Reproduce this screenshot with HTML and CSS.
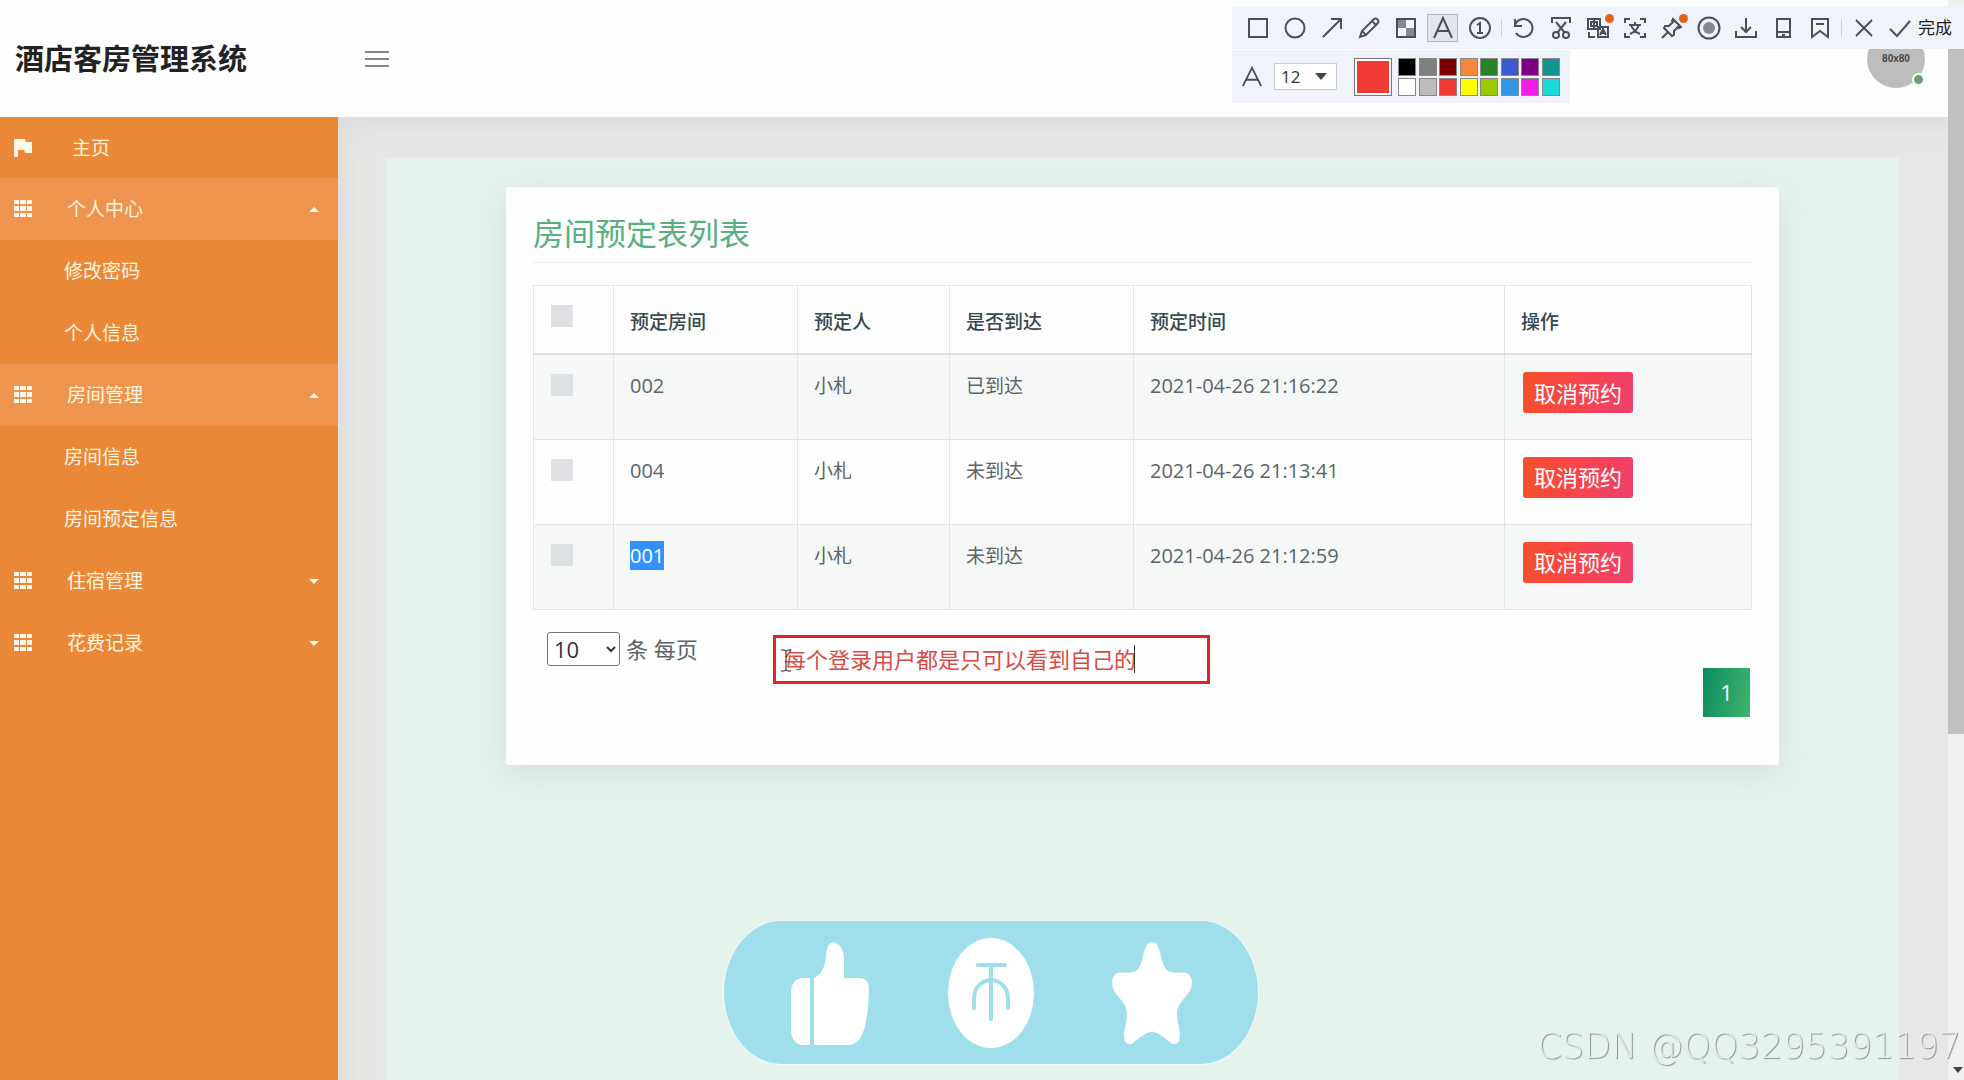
FILE: index.html
```html
<!DOCTYPE html>
<html lang="zh-CN">
<head>
<meta charset="utf-8">
<meta name="viewport" content="width=device-width, initial-scale=1">
<title>酒店客房管理系统</title>
<link rel="stylesheet" href="styles.css">
</head>
<body>
<svg class="defs" width="0" height="0" aria-hidden="true">
  <symbol id="grid" viewBox="0 0 18 18"><path d="M0 0h5v4H0zM6 0h6v4H6zM13 0h5v4h-5zM0 6h5v5H0zM6 6h6v5H6zM13 6h5v5h-5zM0 13h5v4H0zM6 13h6v4H6zM13 13h5v4h-5z"/></symbol>
  <symbol id="up" viewBox="0 0 12 6"><path d="M0 6 6 0l6 6z"/></symbol>
  <symbol id="down" viewBox="0 0 12 6"><path d="M0 0l6 6 6-6z"/></symbol>
</svg>
<div class="page">
  <header class="header">
    <h1 class="brand">酒店客房管理系统</h1>
    <button class="menu-btn" aria-label="菜单"><svg width="24" height="18" viewBox="0 0 24 18"><path d="M0 2h24M0 9h24M0 16h24"/></svg></button>
    <div class="avatar">80x80<span class="online"></span></div>
  </header>
  <div class="body">
    <nav class="sidebar">
      <a class="item home" href="#"><svg class="icon" viewBox="0 0 18 18"><path d="M0 0h11l1 3h6v11h-7l-1-3H4v7H0z"/></svg><span>主页</span></a>
      <a class="item open" href="#"><svg class="icon"><use href="#grid"/></svg><span>个人中心</span><svg class="caret"><use href="#up"/></svg></a>
      <a class="item sub" href="#">修改密码</a>
      <a class="item sub" href="#">个人信息</a>
      <a class="item open" href="#"><svg class="icon"><use href="#grid"/></svg><span>房间管理</span><svg class="caret"><use href="#up"/></svg></a>
      <a class="item sub" href="#">房间信息</a>
      <a class="item sub" href="#">房间预定信息</a>
      <a class="item" href="#"><svg class="icon"><use href="#grid"/></svg><span>住宿管理</span><svg class="caret"><use href="#down"/></svg></a>
      <a class="item" href="#"><svg class="icon"><use href="#grid"/></svg><span>花费记录</span><svg class="caret"><use href="#down"/></svg></a>
    </nav>
    <main class="main">
      <div class="content">
        <section class="card">
          <h2 class="card-title">房间预定表列表</h2>
          <table class="table">
            <colgroup><col class="c-check"><col class="c-room"><col class="c-guest"><col class="c-status"><col class="c-time"><col class="c-action"></colgroup>
            <thead>
              <tr><th><input class="check" type="checkbox" aria-label="全选"></th><th>预定房间</th><th>预定人</th><th>是否到达</th><th>预定时间</th><th>操作</th></tr>
            </thead>
            <tbody>
              <tr><td><input class="check" type="checkbox" aria-label="选择 002"></td><td class="num">002</td><td>小札</td><td>已到达</td><td class="num">2021-04-26 21:16:22</td><td><button class="cancel">取消预约</button></td></tr>
              <tr><td><input class="check" type="checkbox" aria-label="选择 004"></td><td class="num">004</td><td>小札</td><td>未到达</td><td class="num">2021-04-26 21:13:41</td><td><button class="cancel">取消预约</button></td></tr>
              <tr><td><input class="check" type="checkbox" aria-label="选择 001"></td><td class="num"><span class="selected">001</span></td><td>小札</td><td>未到达</td><td class="num">2021-04-26 21:12:59</td><td><button class="cancel">取消预约</button></td></tr>
            </tbody>
          </table>
          <div class="length">
            <select id="size"><option>10</option><option>20</option></select>
            <label for="size">条 每页</label>
          </div>
          <div class="pager"><button class="page-btn">1</button></div>
          <div class="note">
            <input class="note-input" value="每个登录用户都是只可以看到自己的" aria-label="标注文字">
            <span class="note-caret"></span>
            <svg class="ibeam" width="10" height="23" viewBox="0 0 10 23"><path d="M0 1h3l2 1 2-1h3M5 2v19M0 22h3l2-1 2 1h3"/></svg>
          </div>
        </section>
      </div>
    </main>
  </div>
</div>

<div class="scrollbar"><div class="thumb"></div><svg class="scroll-arrow" width="10" height="6"><path d="M0 0h10L5 6z"/></svg></div>

<div class="shot">
  <div class="tools">
    <button class="tool" aria-label="矩形"><svg viewBox="0 0 24 24"><path d="M3 3h18v18H3z"/></svg></button>
    <button class="tool" aria-label="椭圆"><svg viewBox="0 0 24 24"><circle cx="12" cy="12" r="9.500"/></svg></button>
    <button class="tool" aria-label="箭头"><svg viewBox="0 0 24 24"><path d="M3 21 21 3M11 3h10v10"/></svg></button>
    <button class="tool" aria-label="画笔"><svg viewBox="0 0 24 24"><path d="M3 21l2-6L17 3q2-1 3 0l1 1q1 2 0 3L9 19zM15 5l4 4M5 15l4 4"/></svg></button>
    <button class="tool" aria-label="马赛克"><svg viewBox="0 0 24 24"><path class="grey" d="M3 3h9v9H3zM12 12h9v9h-9z"/><path d="M3 3h18v18H3z"/></svg></button>
    <button class="tool active" aria-label="文字"><svg viewBox="0 0 24 24"><path d="M3 22 12 2l9 20M6 15h12"/></svg></button>
    <button class="tool" aria-label="序号"><svg viewBox="0 0 24 24"><circle cx="12" cy="12" r="10"/><path d="M9 9l3-2v10M9 17h6"/></svg></button>
    <span class="sep"></span>
    <button class="tool" aria-label="撤销"><svg viewBox="0 0 24 24"><path d="M3 3v7h7M3 9a9 9 0 1 1 1 8"/></svg></button>
    <button class="tool" aria-label="裁剪"><svg viewBox="0 0 24 24"><path d="M3 7V2h18v5M7 6l9 11M17 6 8 17"/><circle cx="7" cy="19" r="3"/><circle cx="17" cy="19" r="3"/></svg></button>
    <button class="tool" aria-label="翻译"><svg viewBox="0 0 24 24"><path d="M2 3h12v10H2zM5 6h6v4H5zM8 4v8M12 11h10v10H12zM14 19l3-6 3 6M15 17h4M3 16v5h6"/></svg><i class="dot"></i></button>
    <button class="tool" aria-label="文字识别"><svg viewBox="0 0 24 24"><path d="M2 7V3h5M17 3h5v4M22 17v4h-5M7 21H2v-4M6 9h12M12 6v3M8 9q2 6 9 9M16 9q-2 6-9 9"/></svg></button>
    <button class="tool" aria-label="钉住"><svg viewBox="0 0 24 24"><path d="M13 3l8 8-2 1-1-1-4 4v4l-2 1-8-8 1-2h4l4-4-1-1zM8 16l-6 6"/></svg><i class="dot"></i></button>
    <button class="tool" aria-label="录制"><svg viewBox="0 0 24 24"><circle cx="12" cy="12" r="10.500"/><circle class="fill" cx="12" cy="12" r="6"/></svg></button>
    <button class="tool" aria-label="保存"><svg viewBox="0 0 24 24"><path d="M2 15v6h20v-6M12 2v14M7 11l5 5 5-5"/></svg></button>
    <button class="tool" aria-label="发送到手机"><svg viewBox="0 0 24 24"><path d="M6 3h13v18H6zM6 16h13M11 19h3"/></svg></button>
    <button class="tool" aria-label="收藏"><svg viewBox="0 0 24 24"><path d="M4 3h16v18l-8-6-8 6zM8 8h8"/></svg></button>
    <span class="sep"></span>
    <button class="tool" aria-label="关闭"><svg viewBox="0 0 24 24"><path d="M4 4l16 16M20 4 4 20"/></svg></button>
    <button class="tool done"><svg viewBox="0 0 24 24"><path d="M2 13l7 7L22 5"/></svg>完成</button>
  </div>
  <div class="options">
    <svg class="letter" viewBox="0 0 24 24"><path d="M2 22 12 2l10 20M6 15h12"/></svg>
    <button class="font-size">12<svg width="12" height="7"><path d="M0 0h12L6 7z"/></svg></button>
    <button class="current" aria-label="当前颜色"></button>
    <div class="swatches">
      <button class="sw black" aria-label="黑"></button><button class="sw gray" aria-label="灰"></button><button class="sw maroon" aria-label="深红"></button><button class="sw orange" aria-label="橙"></button><button class="sw green" aria-label="绿"></button><button class="sw blue" aria-label="蓝"></button><button class="sw purple" aria-label="紫"></button><button class="sw teal" aria-label="青"></button>
      <button class="sw white" aria-label="白"></button><button class="sw silver" aria-label="银"></button><button class="sw red" aria-label="红"></button><button class="sw yellow" aria-label="黄"></button><button class="sw lime" aria-label="黄绿"></button><button class="sw sky" aria-label="天蓝"></button><button class="sw magenta" aria-label="品红"></button><button class="sw cyan" aria-label="青蓝"></button>
    </div>
  </div>
</div>

<div class="cheer">
  <svg width="80" height="104" viewBox="0 0 80 104"><path d="M20 37v67h-8Q1 102 1 88V52Q1 39 12 37zM24 104V37Q35 32 36 14 37 2 43 1q10 2 11 16v20h17q8 1 8 12-1 32-7 45-4 9-13 10z"/></svg>
  <svg width="86" height="110" viewBox="0 0 86 110"><ellipse cx="43" cy="55" rx="43" ry="55"/><path class="coin" d="M30 27h27M43 27v54M26 70V61c0-25 34-25 34 0v9"/></svg>
  <svg width="80" height="104" viewBox="0 0 80 104"><path d="M40 1c5 0 7 6 9 14 2 9 4 15 10 16 5 2 13-1 17 2 5 3 5 12 1 18-5 8-12 12-12 22 0 12 5 18 2 27-1 3-5 4-8 2-6-5-13-11-19-11s-13 6-19 11c-3 2-7 1-8-2-3-9 2-15 2-27 0-10-7-14-12-22-4-6-4-15 1-18 4-3 12 0 17-2 6-1 8-7 10-16 2-8 4-14 9-14z"/></svg>
</div>
<div class="watermark">CSDN @QQ3295391197</div>
</body>
</html>
```
FILE: styles.css
```css
* { box-sizing: border-box; }
body {
  margin: 0;
  font-family: "Open Sans", "Noto Sans CJK SC", sans-serif;
  font-size: 19px;
  line-height: 30px;
  color: #5b6469;
  background: #e7e8e5;
}
button, select, input { font: inherit; color: inherit; margin: 0; }
button { border: 0; padding: 0; background: none; }
.defs { position: absolute; }

.page { display: flex; flex-direction: column; min-height: 100vh; padding-right: 16px; }
.header {
  display: flex;
  align-items: center;
  height: 117px;
  padding: 0 23px 0 15px;
  background: #fdfefd;
}
.brand { flex: none; width: 350px; margin: 0; font-size: 29px; line-height: 40px; font-weight: 700; color: #222; }
.menu-btn { display: flex; }
.menu-btn svg { stroke: #858585; stroke-width: 2; }
.avatar {
  position: relative;
  margin-left: auto;
  width: 58px;
  height: 58px;
  border-radius: 50%;
  background: #bdbdbd;
  color: #444;
  font: 700 10px/58px "Liberation Sans", sans-serif;
  text-align: center;
}
.online { position: absolute; right: 0; bottom: 2px; width: 13px; height: 13px; border: 2px solid #f4fff4; border-radius: 50%; background: #6f9c74; }

.body { flex: 1; display: flex; }
.sidebar { flex: none; width: 338px; background: #eb8837; }
.item {
  display: flex;
  align-items: center;
  height: 62px;
  padding: 0 18px 0 14px;
  color: #fff6e0;
  text-decoration: none;
}
.item.home { height: 61px; }
.item.home span { margin-left: 5px; }
.item.open { background: #ee944e; }
.item.sub { padding-left: 64px; }
.icon { flex: none; width: 18px; height: 18px; margin-right: 35px; fill: #fff8e8; }
.caret { width: 12px; height: 5px; margin-left: auto; fill: #fff8e8; }

.main {
  flex: 1;
  min-width: 0;
  display: flex;
  padding: 41px 49px 0 48px;
  box-shadow: inset 20px 20px 26px -10px #dbdddc;
}
.content { flex: 1; min-width: 0; padding: 29px 120px; background: #e6f3ec; }
.card {
  position: relative;
  padding: 27px 27px 48px;
  border-radius: 3px;
  background: #fdfefd;
  box-shadow: 0 8px 30px rgba(205, 214, 220, 0.7);
}
.card-title {
  margin: 0 0 22px;
  padding-bottom: 9px;
  border-bottom: 1px solid #eceeee;
  font-size: 31px;
  line-height: 39px;
  font-weight: 400;
  color: #57b07d;
}
.table { width: 100%; table-layout: fixed; border-collapse: collapse; }
.c-check { width: 80px; }
.c-room, .c-status { width: 184px; }
.c-guest { width: 152px; }
.c-time { width: 371px; }
.table th, .table td { border: 1px solid #e2e5e6; text-align: left; vertical-align: top; padding: 16px; }
.table th { height: 68px; padding-top: 21px; border-bottom: 2px solid #dcdfe0; font-weight: 500; color: #37474f; }
.table td { height: 85px; }
.table tbody tr:nth-child(odd) { background: #f6f8f8; }
.num { font-size: 20px; }
.selected { display: inline-block; line-height: 29px; background: #3390ff; color: #fff; }
.check { appearance: none; display: block; width: 22px; height: 22px; margin: 3px 0 0 1px; background: #dde1e3; }
.table th .check { margin-top: -2px; }
.cancel {
  display: block;
  width: 110px;
  height: 41px;
  margin: 1px 2px;
  border-radius: 3px;
  background: linear-gradient(100deg, #f5502a, #fa4548 45%, #ee406c);
  color: #fff;
  font-size: 22px;
}
.length { display: flex; align-items: center; gap: 6px; margin-top: 22px; padding-left: 14px; font-size: 22px; }
.length select { width: 73px; height: 34px; padding: 0 2px; border: 1px solid #767676; border-radius: 3px; background: #fff; color: #333; }
.pager { display: flex; justify-content: flex-end; margin: 2px 2px 0; }
.page-btn { width: 47px; height: 49px; background: linear-gradient(100deg, #0b8c60, #3fb56d); color: #fff; font-size: 22px; }

.note { position: absolute; left: 267px; top: 448px; width: 437px; height: 49px; }
.note-input { display: block; width: 100%; height: 100%; padding: 0 8px 3px; border: 3px solid #e02424; background: transparent; color: #d84a48; font-size: 22px; }
.note-caret { position: absolute; left: 361px; top: 10px; width: 1px; height: 28px; background: #333; }
.ibeam { position: absolute; left: 8px; top: 14px; fill: none; stroke: #222; }

.scrollbar { position: fixed; top: 0; right: 0; bottom: 0; width: 16px; padding-top: 17px; background: #f0f0ee; }
.thumb { height: 717px; background: #c0c0be; }
.scroll-arrow { position: absolute; left: 5px; bottom: 7px; fill: #444; }

.shot { position: fixed; top: 6px; right: 0; display: flex; flex-direction: column; align-items: flex-start; gap: 1px; }
.tools { display: flex; align-items: center; width: 732px; height: 43px; padding-left: 7px; background: #f0f4fa; }
.tool { position: relative; flex: none; display: flex; align-items: center; justify-content: center; width: 37px; height: 28px; font-size: 17px; color: #222; }
.tool svg { flex: none; width: 24px; height: 24px; fill: none; stroke: #4a4f5a; stroke-width: 2; }
.tool .grey, .tool .fill { fill: #858a96; stroke: none; }
.tool.active { width: 31px; margin: 0 3px; border: 1px solid #b4b8bd; background: #e2e6ea; }
.tool.done { width: auto; gap: 6px; padding-left: 6px; }
.sep { width: 1px; height: 18px; margin: 0 3px; background: #cfd3d8; }
.dot { position: absolute; right: 2px; top: 0; width: 9px; height: 9px; border-radius: 50%; background: #e0601c; }
.options { display: flex; align-items: center; width: 338px; height: 53px; padding-left: 9px; background: #f0f4fa; }
.letter { width: 22px; height: 22px; fill: none; stroke: #4a4f5a; stroke-width: 2; }
.font-size { display: flex; align-items: center; justify-content: space-between; width: 63px; height: 27px; margin-left: 11px; padding: 0 9px 0 6px; border: 1px solid #c8ccd0; background: #fff; font-size: 17px; color: #333; }
.font-size svg { fill: #444; }
.current { width: 38px; height: 38px; margin: 0 6px 0 17px; border: 1px solid #777; background: #f03a36; box-shadow: inset 0 0 0 2px #fff; }
.swatches { display: grid; width: 162px; grid-template-columns: repeat(8, 18px); justify-content: space-between; row-gap: 2px; }
.sw { width: 18px; height: 18px; border: 1px solid #888; }
.black { background: #000; }
.gray { background: #808080; }
.maroon { background: #7c0000; }
.orange { background: #f58836; }
.green { background: #2a8228; }
.blue { background: #3a5bd0; }
.purple { background: #7d0082; }
.teal { background: #129591; }
.white { background: #fff; }
.silver { background: #bcbcbc; }
.red { background: #f03a36; }
.yellow { background: #ff0; }
.lime { background: #99cb00; }
.sky { background: #3396e6; }
.magenta { background: #f01de8; }
.cyan { background: #19dbd3; }

.cheer {
  position: fixed;
  left: 50%;
  bottom: 16px;
  margin-left: -258px;
  width: 534px;
  height: 143px;
  display: flex;
  align-items: center;
  justify-content: space-between;
  padding: 0 66px;
  border-radius: 58px / 72px;
  background: #9fdeeb;
  box-shadow: 0 0 1px 1px #f0faf8;
}
.cheer svg { fill: #fff; }
.cheer .coin { fill: none; stroke: #9fdeeb; stroke-width: 4; stroke-linecap: round; }
.watermark {
  position: fixed;
  right: 3px;
  bottom: 14px;
  font: 200 35px/40px "DejaVu Sans", sans-serif;
  color: rgba(236, 242, 238, 0.9);
  text-shadow: 1px 1px 1px #8d9290;
  white-space: nowrap;
}
```
